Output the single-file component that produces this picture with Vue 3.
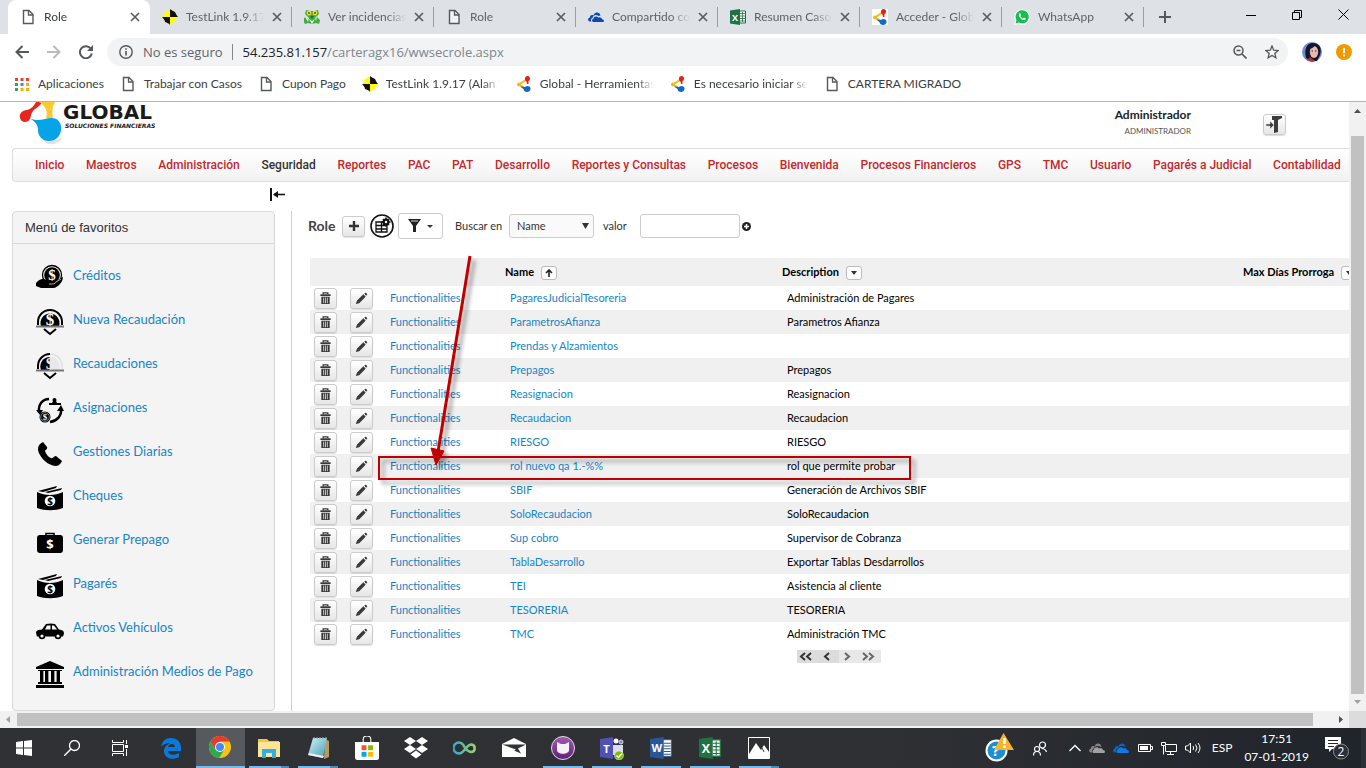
<script setup>
import { h, ref } from 'vue'

const SERIF = 'Liberation Serif, serif'
const SANS = 'Open Sans, sans-serif'

// Lettering that sits on top of an icon's shape, in the units of its box.
const marks = {
  excel: { t: 'X', x: 5, y: 11.5, size: 9, fill: '#fff', font: SANS },
  word: { t: 'W', x: 5, y: 11, size: 8, fill: '#fff', font: SANS },
  teams: { t: 'T', x: 6.5, y: 16.5, size: 11, fill: '#fff', font: SANS },
  hand: { t: '$', x: 16, y: 16, size: 15, fill: '#fff', font: SERIF },
  coin: { t: '$', x: 14, y: 17, size: 17, fill: '#fff', font: SERIF },
  halfcoin: { t: '$', x: 14, y: 17, size: 17, fill: '#e8e8e8', font: SERIF },
  cycle: { t: '$', x: 9, y: 24, size: 9, fill: '#fff', font: SERIF },
  cash: { t: '$', x: 14, y: 21, size: 10, fill: '#000', font: SANS },
  case: { t: '$', x: 14, y: 21, size: 13, fill: '#fff', font: SANS },
}

const boxes = { 16: ['excel', 'word'], 24: ['teams'] }

const Icon = ({ name, size }) => {
  const m = marks[name]
  const box = boxes[16].includes(name) ? 16 : boxes[24].includes(name) ? 24 : size
  return h('svg', { width: size, height: size, viewBox: `0 0 ${box} ${box}` }, [
    h('use', { href: '#' + name, width: box, height: box }),
    m && h('text', { x: m.x, y: m.y, 'text-anchor': 'middle', 'font-size': m.size, 'font-weight': 700, 'font-family': m.font, fill: m.fill }, m.t),
  ])
}
Icon.props = ['name', 'size']

const tabs = [
  { icon: 'doc', title: 'Role', active: true },
  { icon: 'testlink', title: 'TestLink 1.9.17' },
  { icon: 'mantis', title: 'Ver incidencias' },
  { icon: 'doc', title: 'Role' },
  { icon: 'onedrive', title: 'Compartido co' },
  { icon: 'excel', title: 'Resumen Caso' },
  { icon: 'globalw', title: 'Acceder - Glob' },
  { icon: 'whatsapp', title: 'WhatsApp' },
]

const bookmarks = [
  { icon: 'apps', title: 'Aplicaciones' },
  { icon: 'doc', title: 'Trabajar con Casos' },
  { icon: 'doc', title: 'Cupon Pago' },
  { icon: 'testlink', title: 'TestLink 1.9.17 (Alan T', cut: true },
  { icon: 'global', title: 'Global - Herramientas', cut: true },
  { icon: 'global', title: 'Es necesario iniciar se', cut: true },
  { icon: 'doc', title: 'CARTERA MIGRADO' },
]

const menu = ['Inicio', 'Maestros', 'Administración', 'Seguridad', 'Reportes', 'PAC', 'PAT', 'Desarrollo', 'Reportes y Consultas', 'Procesos', 'Bienvenida', 'Procesos Financieros', 'GPS', 'TMC', 'Usuario', 'Pagarés a Judicial', 'Contabilidad']

const favorites = [
  { icon: 'hand', title: 'Créditos' },
  { icon: 'coin', title: 'Nueva Recaudación' },
  { icon: 'halfcoin', title: 'Recaudaciones' },
  { icon: 'cycle', title: 'Asignaciones' },
  { icon: 'phone', title: 'Gestiones Diarias' },
  { icon: 'cash', title: 'Cheques' },
  { icon: 'case', title: 'Generar Prepago' },
  { icon: 'cash', title: 'Pagarés' },
  { icon: 'car', title: 'Activos Vehículos' },
  { icon: 'bank', title: 'Administración Medios de Pago' },
]

const roles = [
  ['PagaresJudicialTesoreria', 'Administración de Pagares'],
  ['ParametrosAfianza', 'Parametros Afianza'],
  ['Prendas y Alzamientos', ''],
  ['Prepagos', 'Prepagos'],
  ['Reasignacion', 'Reasignacion'],
  ['Recaudacion', 'Recaudacion'],
  ['RIESGO', 'RIESGO'],
  ['rol nuevo qa 1.-%%', 'rol que permite probar'],
  ['SBIF', 'Generación de Archivos SBIF'],
  ['SoloRecaudacion', 'SoloRecaudacion'],
  ['Sup cobro', 'Supervisor de Cobranza'],
  ['TablaDesarrollo', 'Exportar Tablas Desdarrollos'],
  ['TEI', 'Asistencia al cliente'],
  ['TESORERIA', 'TESORERIA'],
  ['TMC', 'Administración TMC'],
]

const apps = [
  { icon: 'edge', name: 'Edge' },
  { icon: 'chrome', name: 'Chrome', current: true },
  { icon: 'folder', name: 'Explorador', open: true, multi: true },
  { icon: 'notepad', name: 'Bloc de notas', open: true, multi: true },
  { icon: 'store', name: 'Store', size: 24 },
  { icon: 'dropbox', name: 'Dropbox', size: 24 },
  { icon: 'infinity', name: 'Infinity', size: 24 },
  { icon: 'mail', name: 'Correo', size: 24 },
  { icon: 'github', name: 'GitHub', size: 24, open: true },
  { icon: 'teams', name: 'Teams', size: 24, open: true },
  { icon: 'word', name: 'Word', open: true },
  { icon: 'excel', name: 'Excel', open: true },
  { icon: 'photos', name: 'Fotos', open: true, multi: true },
]

const field = ref('Name')
const value = ref('')
</script>

<template>
  <div class="screen">
    <svg class="defs" aria-hidden="true">
      <defs>
        <linearGradient id="inf" x1="0" x2="1"><stop offset="0" stop-color="#35a7cf" /><stop offset="1" stop-color="#9bd36a" /></linearGradient>
        <linearGradient id="note" x1="0" y1="0" x2="1" y2="1"><stop offset="0" stop-color="#d5f2f7" /><stop offset="1" stop-color="#3c9fb4" /></linearGradient>
        <linearGradient id="gh" x1="0" y1="0" x2="0" y2="1"><stop offset="0" stop-color="#a35bb5" /><stop offset="1" stop-color="#5d2077" /></linearGradient>
      </defs>
      <symbol id="doc" viewBox="0 0 16 16"><path d="M3.500 1.500H9l4 4v9H3.500z" fill="#fff" fill-opacity=".6" stroke="#55585c" stroke-width="1.400" /><path d="M8.500 1.500v4.500H13" fill="none" stroke="#55585c" stroke-width="1.300" /></symbol>
      <symbol id="testlink" viewBox="0 0 16 16"><path d="M8 0 L8 8 H0 C1 7 2 6 3 3 C5 2 7 1 8 0z" fill="#ff0" /><path d="M8 0C9 1 11 2 13 3C14 5 15 7 16 8H8z" fill="#111" /><path d="M0 8H8V16C7 14 5 14 3 13C3 11 1 9 0 8z" fill="#111" /><path d="M8 8H16C14 9 14 11 13 13C11 13 9 14 8 16z" fill="#ff0" /></symbol>
      <symbol id="mantis" viewBox="0 0 16 16"><path d="M2 1l5 1h3l4-1 1 4-4 4 1 3 1-4 3 3-1 4-3-1-4 1-4-1-3 1-2-4 2-3 3 5 1-4-4-4z" fill="#3fae3a" /><path d="M5 10l3 5 3-5-3 2z" fill="#fff" /><circle cx="5" cy="4" r="2.400" fill="#f2e12c" /><circle cx="11" cy="4" r="2.400" fill="#f2e12c" /><circle cx="5" cy="4" r="1" fill="#543" /><circle cx="11" cy="4" r="1" fill="#543" /><path d="M6 7h4l-2 3z" fill="#187a25" /></symbol>
      <symbol id="onedrive" viewBox="0 0 16 16"><path d="M3.500 12.500H2C-.5 12-.5 9 2 8.500C2 6 4 5.500 5.500 6.500C6.500 2.500 12 2.500 12.500 7C11.500 6.700 11 7 10.500 7C8.500 5 5 6 4.500 9C3 9.500 2.500 11 3.500 12.500z" fill="#094ab2" /><path d="M5.500 13C3.500 13 3.500 10.200 5.500 9.800C5.500 7.300 9 6.800 10.200 8.700C12 7.500 14 9 14 10.200C16.500 10.200 16.500 13 14.500 13z" fill="#094ab2" /></symbol>
      <symbol id="cloudgray" viewBox="0 0 16 16"><path d="M3.500 12.500H2C-.5 12-.5 9 2 8.500C2 6 4 5.500 5.500 6.500C6.500 2.500 12 2.500 12.500 7C8.500 5 5 6 4.500 9C3 9.500 2.500 11 3.500 12.500z" fill="#858585" /><path d="M5 13C3 13 3 10 5 9.500C5 7 9 6.500 10 8.500C12 7 14 9 14 10C16.500 10 16.500 13 14.500 13z" fill="#a0a0a0" /></symbol>
      <symbol id="cloudblue" viewBox="0 0 16 16"><path d="M3.500 12.500H2C-.5 12-.5 9 2 8.500C2 6 4 5.500 5.500 6.500C6.500 2.500 12 2.500 12.500 7C8.500 5 5 6 4.500 9C3 9.500 2.500 11 3.500 12.500z" fill="#0a66c4" /><path d="M5 13C3 13 3 10 5 9.500C5 7 9 6.500 10 8.500C12 7 14 9 14 10C16.500 10 16.500 13 14.500 13z" fill="#0f7be0" /></symbol>
      <symbol id="excel" viewBox="0 0 16 16"><path d="M9 2h6.500v12H9z" fill="#fff" stroke="#207245" /><path d="M10 4.500h5M10 7h5M10 9.500h5M10 12h5M12.500 3v10" stroke="#207245" stroke-width=".8" /><path d="M0 1.500L10 0v16L0 14.500z" fill="#207245" /></symbol>
      <symbol id="word" viewBox="0 0 16 16"><path d="M9 2h6.500v12H9z" fill="#fff" stroke="#2a5699" stroke-width=".5" /><path d="M10 4.500h5M10 6.500h5M10 8.500h5M10 10.500h5M10 12.500h5" stroke="#2a5699" stroke-width=".8" /><path d="M0 1.500L10 0v16L0 14.500z" fill="#2a5699" /></symbol>
      <symbol id="global" viewBox="0 0 16 16"><path d="M10.500 3.500L3 8.500l5 3" fill="none" stroke="#f8b817" stroke-width="2" /><circle cx="3" cy="8.500" r="2" fill="#f8b817" /><path d="M9 2h4.500c0 1-1.500 3-1 6h-1.500c0-3-2-3-2-6z" fill="#e2231a" /><circle cx="11.500" cy="2.500" r="2.500" fill="#e2231a" /><path d="M4 10.500l5 .5c2-2 6-1 5.500 2 0 4-7 4-7 0z" fill="#1469c4" /></symbol>
      <symbol id="globalw" viewBox="0 0 16 16"><path d="M0 0h16v16H0z" fill="#fff" /><use href="#global" width="16" height="16" /></symbol>
      <symbol id="whatsapp" viewBox="0 0 16 16"><path d="M0 16l1.200-4.300A7.800 7.800 0 1 1 4.300 15z" fill="#fff" /><path d="M1.500 14.500l1-3.300A6.600 6.600 0 1 1 5 13.600z" fill="#12c04b" /><path d="M5.500 4.300c-1 .8-1 2 0 3.700 1.500 2.200 3.500 3.500 5 3 1-.3 1.400-1.200 1.200-1.600l-1.700-.9-.9 1c-1.300-.4-2.200-1.300-2.700-2.500l.7-.9-.7-1.800z" fill="#fff" /></symbol>
      <symbol id="apps" viewBox="0 0 16 16"><path d="M1 2h3v3H1zM6.500 2h3v3h-3zM12 2h3v3h-3z" fill="#ea4335" /><path d="M1 7h3v3H1z" fill="#34a853" /><path d="M6.500 7h3v3h-3z" fill="#4285f4" /><path d="M12 7h3v3h-3zM6.500 12h3v3h-3zM12 12h3v3h-3z" fill="#f9ab00" /><path d="M1 12h3v3H1z" fill="#34a853" /></symbol>
      <symbol id="close" viewBox="0 0 10 10"><path d="M1 1l8 8M9 1L1 9" stroke="#5a5d61" stroke-width="1.700" /></symbol>

      <symbol id="hand" viewBox="0 0 28 28"><circle cx="16" cy="11" r="9.500" fill="#f4f4f4" stroke="#000" stroke-width="1.300" /><circle cx="16" cy="11" r="7.800" /><path d="M0 19c4-5 8-5 13-2 3 0 5 0 5 1 3-1 6-4 9-5 0 5-5 10-9 11H5l-5-2z" /><path d="M13 20c4 0 6 0 7-2l5-3" fill="none" stroke="#f4f4f4" stroke-width=".7" /></symbol>
      <symbol id="coin" viewBox="0 0 28 28"><path d="M2 17v-3a12 12 0 0 1 24 0v3" fill="none" stroke="#000" stroke-width="2" /><path d="M5 18a9.500 9.500 0 1 1 18 0z" /><path d="M0 18.500h28" stroke="#777" stroke-width="2" /><path d="M8 21l6 5 6-5" fill="none" stroke="#000" stroke-width="2" /></symbol>
      <symbol id="halfcoin" viewBox="0 0 28 28"><path d="M14 2a12 12 0 0 1 12 12v3" fill="none" stroke="#e4e4e4" stroke-width="2" /><path d="M14 5a9.500 9.500 0 0 1 9 13h-9z" fill="#e8e8e8" /><path d="M2 17v-3A12 12 0 0 1 14 2" fill="none" stroke="#000" stroke-width="2" /><path d="M5 18a9.500 9.500 0 0 1 9-13v13z" /><path d="M0 18.500h28" stroke="#777" stroke-width="2" /><path d="M8 21l6 5 6-5" fill="none" stroke="#000" stroke-width="2" /></symbol>
      <symbol id="cycle" viewBox="0 0 28 28"><path d="M3 16C2 8 7 3 13 3M25 12c1 8-4 13-11 14" fill="none" stroke="#000" stroke-width="2.500" /><path d="M0 14h7l-3 5zM21 15l4-6 3 6z" /><circle cx="9" cy="21" r="5.500" /><circle cx="9" cy="21" r="4.300" fill="none" stroke="#aaa" stroke-width=".7" /><circle cx="18.500" cy="4" r="2" /><path d="M17 5h3l1 2h4v2H13V7h3z" /></symbol>
      <symbol id="phone" viewBox="0 0 28 28"><path d="M7 2c-6 3-6 8-3 13 4 7 11 11 16 11 3 0 5-3 6-5l-6-5c-2 0-3 3-5 2-3-1-5-4-6-7 0-1 3-2 2-4z" /></symbol>
      <symbol id="cash" viewBox="0 0 28 28"><path d="M1 8c8 4 18 4 26 0v16c-8 3-18 3-26 0z" /><path d="M2 7L21 2l-1 2-13 4zM9 8l17-4-1 2-13 3z" /><circle cx="14" cy="17" r="5.300" fill="#fff" /></symbol>
      <symbol id="case" viewBox="0 0 28 28"><path d="M10 8V5.500h8V8" fill="none" stroke="#000" stroke-width="1.600" /><rect x="1" y="7" width="26" height="18" rx="3" /></symbol>
      <symbol id="car" viewBox="0 0 28 28"><path d="M0 17c0-3 3-3 6-3.500l4-5.500q5-1 9 0l4 5.500c3 .5 5 1 5 4l-1 3H1z" /><path d="M9 13.500l2-4h3.500v4zM16 9.500h2l3 4h-5z" fill="#f4f4f4" /><circle cx="6" cy="20" r="3.300" /><circle cx="22" cy="20" r="3.300" /><circle cx="6" cy="20" r="1.600" fill="#f4f4f4" /><circle cx="22" cy="20" r="1.600" fill="#f4f4f4" /></symbol>
      <symbol id="bank" viewBox="0 0 28 28"><path d="M14 1l14 6v2H0V7zM2 10h24v1H2zM4 11h3v11H4zM9 11h3v11H9zM15 11h3v11h-3zM21 11h3v11h-3zM2 22h24v2H2zM0 25h28v3H0z" /><path d="M7 11h1v11H7zM12 11h1v11h-1zM18 11h1v11h-1zM20 11h1v11h-1z" fill="#999" /></symbol>

      <symbol id="trash" viewBox="0 0 14 14"><path d="M4.500 2.500V1h5v1.500" fill="none" stroke="#3a3a3a" stroke-width="1.400" /><path d="M1.500 2.300h11v2h-11zM2.500 5h9v8h-9z" fill="#3a3a3a" /><path d="M5 6v6M7 6v6M9 6v6" stroke="#ddd" stroke-width=".9" /></symbol>
      <symbol id="pencil" viewBox="0 0 14 14"><path d="M1 13l1-3.500L9 2.500 11.500 5l-7 7zM10 1.800L11 1c.8-.6 2.600 1 2 2l-1 1z" fill="#3a3a3a" /></symbol>

      <symbol id="edge" viewBox="0 0 22 22"><path d="M1 10C2 4 6 1 11 1c6 0 10 4 10 10v3H8c0 4 6 5 11 2v4c-7 4-15 1-15-6 0-4 3-6 6-8C7 6 3 7 1 10zM8 10h7c0-4-6-4-7 0z" fill="#0b78dc" /></symbol>
      <symbol id="chrome" viewBox="0 0 22 22"><circle cx="11" cy="11" r="11" fill="#fbc116" /><path d="M1.500 5.500A11 11 0 0 0 10 22l5.500-8.500H6.500z" fill="#2da94f" /><path d="M1.500 5.500A11 11 0 0 1 20.500 5.500H11l-4.500 8z" fill="#e33b2e" /><circle cx="11" cy="11" r="5" fill="#fff" /><circle cx="11" cy="11" r="4" fill="#4688f4" /></symbol>
      <symbol id="folder" viewBox="0 0 22 22"><path d="M0 2h9l2 2h10v16H0z" fill="#f3c73d" /><path d="M0 5h22v15H0z" fill="#fee495" /><path d="M4 12h14v9h-4v-5H8v5H4z" fill="#33aee4" /></symbol>
      <symbol id="notepad" viewBox="0 0 22 22"><path d="M18 2l4 2v16l-5 2z" fill="#b89a63" /><path d="M6 1h14l-4 20-15-3z" fill="url(#note)" /><path d="M7 0v2M10 0v2M13 0v2M16 0v2M19 0v2" stroke="#9aa" /><path d="M1 18l15 3 1-2-15-3z" fill="#eee" /></symbol>
      <symbol id="store" viewBox="0 0 22 22"><path d="M7.500 6V3q0-3 3.500-3t3.500 3v3" fill="none" stroke="#fff" /><path d="M0 5.500h22v15c0 1-1 1.500-2 1.500H2c-1 0-2-1-2-2z" fill="#fff" /><path d="M6 8.500h4.500V13H6z" fill="#f35325" /><path d="M12 8.500h4.500V13H12z" fill="#81bc06" /><path d="M6 14.500h4.500V19H6z" fill="#05a6f0" /><path d="M12 14.500h4.500V19H12z" fill="#ffba08" /></symbol>
      <symbol id="dropbox" viewBox="0 0 24 24"><path d="M6 1l6 4-6 4-6-4zM18 1l6 4-6 4-6-4zM6 9l6 4-6 4-6-4zM18 9l6 4-6 4-6-4zM12 14.500l5.500 4L12 22.500l-5.500-4z" fill="#fff" /></symbol>
      <symbol id="infinity" viewBox="0 0 24 24"><path d="M12 12C10 7.500 8 6.500 6 6.500a5.500 5.500 0 0 0 0 11c5.500 0 7-9 12.500-9a3.800 3.800 0 0 1 0 7.500c-3 0-4.500-1.500-6.500-4" fill="none" stroke="url(#inf)" stroke-width="2.500" /></symbol>
      <symbol id="mail" viewBox="0 0 24 24"><path d="M0 8L12 2l12 6v13H0z" fill="#fff" /><path d="M0 8.500l14 5-2 1 7 3-3-5 8-4H0z" fill="#303236" /></symbol>
      <symbol id="github" viewBox="0 0 24 24"><circle cx="12" cy="12" r="11.500" fill="url(#gh)" stroke="#ddd" /><path d="M6 6l4 2h4l4-2v8c0 5-12 5-12 0z" fill="#f6f0f7" /></symbol>
      <symbol id="teams" viewBox="0 0 24 24"><circle cx="16" cy="5" r="2.500" fill="#fff" /><circle cx="21" cy="6" r="2" fill="#7b83eb" stroke="#ddd" /><path d="M13 9h10v10H13z" fill="#dcdcf0" /><path d="M0 3l13-2v22L0 21z" fill="#4f52b2" /><circle cx="19" cy="19.500" r="4.500" fill="#7fba00" stroke="#fff" stroke-width=".5" /><path d="M16.500 19.500l2 2 3.500-4" fill="none" stroke="#fff" stroke-width="1.500" /></symbol>
      <symbol id="photos" viewBox="0 0 22 22"><path d="M.5.500h21v21H.5z" fill="none" stroke="#fff" /><path d="M1 17L8 6l5 7 3-5 5 7v6H1z" fill="#fff" /><path d="M14 11l2 4" stroke="#303236" /></symbol>
    </svg>

    <header class="tabs">
      <div v-for="(t, i) in tabs" :key="i" class="tab" :class="{ active: t.active }">
        <Icon :name="t.icon" :size="16" />
        <span class="fade">{{ t.title }}</span>
        <button class="plain" aria-label="Cerrar"><svg class="x"><use href="#close" /></svg></button>
      </div>
      <button class="plain newtab" aria-label="Nueva pestaña"><svg width="12" height="12"><path d="M6 0v12M0 6h12" stroke="#55585c" stroke-width="2" /></svg></button>
      <div class="winbtns">
        <button class="plain" aria-label="Minimizar"><svg width="10" height="10"><path d="M0 5.500h10" stroke="#000" /></svg></button>
        <button class="plain" aria-label="Restaurar"><svg width="10" height="10"><path d="M.5 2.500h7v7h-7zM2.500 2.500v-2h7v7h-2" fill="none" stroke="#000" /></svg></button>
        <button class="plain" aria-label="Cerrar ventana"><svg width="11" height="11"><path d="M.5.500l10 10M10.500.500l-10 10" stroke="#000" /></svg></button>
      </div>
    </header>

    <div class="toolbar">
      <button class="plain" aria-label="Atrás"><svg width="14" height="14"><path d="M14 7H1.500M7.500 1L1.500 7l6 6" fill="none" stroke="#55585c" stroke-width="2" /></svg></button>
      <button class="plain" aria-label="Adelante"><svg width="14" height="14"><path d="M0 7h12.500M6.500 1l6 6-6 6" fill="none" stroke="#b9bbbd" stroke-width="2" /></svg></button>
      <button class="plain" aria-label="Recargar"><svg width="14" height="14"><path d="M12 4a6 6 0 1 0 .8 4.500" fill="none" stroke="#55585c" stroke-width="2" /><path d="M14 0v6H8z" fill="#55585c" /></svg></button>
      <div class="omnibox">
        <svg width="14" height="14"><circle cx="7" cy="7" r="6.200" fill="none" stroke="#55585c" stroke-width="1.400" /><path d="M7 6v4.500M7 3.300v1.500" stroke="#55585c" stroke-width="1.600" /></svg>
        <span class="insecure">No es seguro</span>
        <span class="url"><b>54.235.81.157</b>/carteragx16/wwsecrole.aspx</span>
        <svg class="zoomi" width="14" height="14"><circle cx="5.500" cy="5.500" r="4.500" fill="none" stroke="#55585c" stroke-width="1.500" /><path d="M3.500 5.500h4M9 9l4.500 4.500" stroke="#55585c" stroke-width="1.700" /></svg>
        <svg width="14" height="14" viewBox="0 0 14 14"><path d="M7 1l1.700 4.200 4.500.3-3.400 2.900 1.100 4.400L7 10.400l-3.900 2.400 1.100-4.400L.8 5.500l4.500-.3z" fill="none" stroke="#55585c" stroke-width="1.300" /></svg>
      </div>
      <svg class="avatar" width="20" height="20" viewBox="0 0 20 20"><circle cx="10" cy="10" r="10" fill="#6d8fd0" /><path d="M4 16C2 8 4 1 11 1s9 6 7 12l-3 6H8z" fill="#17152a" /><ellipse cx="12" cy="10" rx="4.200" ry="6" fill="#e6b9ae" /><path d="M7 7q5-1 6-4l4 4-2-5H8z" fill="#17152a" /><path d="M5 18l3-3 5 4-3 1z" fill="#b5323c" /><path d="M9.500 9h1.500M13 9h1.500" stroke="#432" /></svg>
      <svg width="16" height="16"><circle cx="8" cy="8" r="8" fill="#f29900" /><path d="M8 4v5M8 10.500v2" stroke="#fff" stroke-width="2" /></svg>
    </div>

    <nav class="bookmarks">
      <a v-for="(b, i) in bookmarks" :key="i" href="#" :class="{ cut: b.cut }"><Icon :name="b.icon" :size="16" /><span>{{ b.title }}</span></a>
    </nav>

    <div class="frame">
      <div class="page">
        <div class="brandbar">
          <svg class="logo" width="47" height="44" viewBox="0 0 47 44"><path d="M26 27c2 10 14 14 21 8-4 8-14 9-18 5z" fill="#000" opacity=".12" /><path d="M20 0c-2 4-5 7-9 8-5 0-8 4-7 8 1 4 5 5 8 3 3-1 2-6 5-10 2-3 7-4 9-9z" fill="#e8251c" /><path d="M23 0h16c-3 5-3 10-2 17l-7-1c2-6 0-12-7-16z" fill="#fcc931" /><path d="M13 16c8 4 15 1 21 0 8-1 12 5 11 12-1 8-7 11-12 11-7 0-11-5-11-11 0-5-3-9-9-12z" fill="#06a3e6" /></svg>
          <div class="brand"><strong>GLOBAL</strong><small>SOLUCIONES FINANCIERAS</small></div>
          <div class="user"><strong>Administrador</strong><small>ADMINISTRADOR</small></div>
          <button class="btn" aria-label="Salir"><svg width="17" height="17"><path d="M6 0h10v2l-4 2v12l-4 1V4H6z" fill="#3c3c3c" /><path d="M0 8h4V5l4 4-4 4v-3H0z" fill="#3c3c3c" stroke="#eee" stroke-width=".5" /></svg></button>
        </div>

        <nav class="menu">
          <a v-for="m in menu" :key="m" href="#" :class="{ on: m === 'Seguridad' }">{{ m }}</a>
        </nav>

        <div class="collapse">
          <button class="plain" aria-label="Contraer menú"><svg width="16" height="13"><path d="M1 0v13" stroke="#111" stroke-width="2" /><path d="M4 6.500h11" stroke="#111" stroke-width="1.600" /><path d="M3 6.500L8 3v7z" fill="#111" /></svg></button>
        </div>

        <div class="columns">
          <aside class="sidebar">
            <h2>Menú de favoritos</h2>
            <ul>
              <li v-for="f in favorites" :key="f.title"><a href="#"><Icon :name="f.icon" :size="28" /><span>{{ f.title }}</span></a></li>
            </ul>
          </aside>

          <main class="content">
            <form class="search" @submit.prevent>
              <h1>Role</h1>
              <button type="button" class="btn" aria-label="Agregar"><svg width="10" height="10"><path d="M5 0v10M0 5h10" stroke="#333" stroke-width="2.400" /></svg></button>
              <button type="button" class="plain round" aria-label="Columnas"><svg width="24" height="24"><circle cx="12" cy="12" r="11" fill="#fff" stroke="#111" stroke-width="1.600" /><path d="M6 8h11v10H6zM6 11.500h11M6 15h11M11.500 8v10" fill="none" stroke="#111" stroke-width="1.300" /><circle cx="16" cy="8" r="3.500" fill="#111" /><path d="M16 3.500v9M11.500 8h9M13 5l6 6M19 5l-6 6" stroke="#111" stroke-width="1.600" /><circle cx="16" cy="8" r="1.200" fill="#fff" /></svg></button>
              <button type="button" class="filter" aria-label="Filtrar"><svg width="26" height="14"><path d="M0 0h13L8 7v6H5V7z" fill="#222" /><path d="M3 2h7" stroke="#fff" stroke-width=".8" /><path d="M19 6h6l-3 3z" fill="#333" /></svg></button>
              <label for="field" class="in">Buscar en</label>
              <span class="select"><select id="field" v-model="field"><option>Name</option></select><svg width="7" height="6"><path d="M0 0h7L3.500 6z" fill="#333" /></svg></span>
              <label for="value" class="valor">valor</label>
              <input id="value" v-model="value" type="text">
              <button type="button" class="plain" aria-label="Agregar filtro"><svg width="9" height="9"><circle cx="4.500" cy="4.500" r="4.500" fill="#222" /><path d="M4.500 2v5M2 4.500h5" stroke="#fff" stroke-width="1.500" /></svg></button>
            </form>

            <table>
              <colgroup><col class="c1"><col class="c2"><col class="c3"><col class="c4"><col class="c5"><col></colgroup>
              <thead>
                <tr>
                  <th></th><th></th><th></th>
                  <th><span>Name</span><button class="sort" aria-label="Orden ascendente"><svg width="8" height="8"><path d="M4 8V1M1 4l3-3 3 3" fill="none" stroke="#222" stroke-width="1.600" /></svg></button></th>
                  <th><span>Description</span><button class="sort" aria-label="Ordenar"><svg width="6" height="4"><path d="M0 0h6L3 4z" fill="#333" /></svg></button></th>
                  <th><span>Max Días Prorroga</span><button class="sort" aria-label="Ordenar"><svg width="6" height="4"><path d="M0 0h6L3 4z" fill="#333" /></svg></button></th>
                </tr>
              </thead>
              <tbody>
                <tr v-for="r in roles" :key="r[0]">
                  <td class="act"><button class="btn" aria-label="Eliminar"><svg width="13" height="13"><use href="#trash" /></svg></button></td>
                  <td><button class="btn" aria-label="Modificar"><svg width="13" height="13"><use href="#pencil" /></svg></button></td>
                  <td><a href="#">Functionalities</a></td>
                  <td><a href="#">{{ r[0] }}</a></td>
                  <td>{{ r[1] }}</td>
                  <td></td>
                </tr>
              </tbody>
            </table>

            <div class="pager">
              <button class="plain" aria-label="Primera"><svg width="13" height="9"><path d="M6 1L2 4.500 6 8M12 1L8 4.500 12 8" /></svg></button>
              <button class="plain" aria-label="Anterior"><svg width="7" height="9"><path d="M6 1L2 4.500 6 8" /></svg></button>
              <button class="plain next" aria-label="Siguiente"><svg width="7" height="9"><path d="M1 1l4 3.500L1 8" /></svg></button>
              <button class="plain next" aria-label="Última"><svg width="13" height="9"><path d="M1 1l4 3.500L1 8M7 1l4 3.500L7 8" /></svg></button>
            </div>

            <svg class="callout" width="560" height="240" aria-hidden="true">
              <g fill="none" stroke="#c00000" stroke-width="3">
                <rect x="9" y="207" width="531" height="22" stroke-width="2" />
                <path d="M100 6L68 202" />
                <path d="M66 215l-5-17 13 3z" fill="#c00000" stroke-width="1" />
              </g>
            </svg>
          </main>
        </div>
      </div>
      <div class="vbar"><svg width="7" height="4"><path d="M0 4h7L3.500 0z" fill="#505050" /></svg><i></i><svg width="7" height="4"><path d="M0 0h7L3.500 4z" fill="#a0a0a0" /></svg></div>
      <div class="hbar"><svg width="4" height="7"><path d="M4 0v7L0 3.500z" fill="#a0a0a0" /></svg><i></i><svg width="4" height="7"><path d="M0 0v7l4-3.500z" fill="#505050" /></svg></div>
      <div class="corner"></div>
    </div>

    <footer class="taskbar">
      <div class="sys">
        <button class="plain" aria-label="Inicio"><svg width="16" height="16"><path d="M0 2l7-1v6.500H0zM8 1l8-1v7.500H8zM0 8.500h7V15l-7-1zM8 8.500h8V16l-8-1z" fill="#fff" /></svg></button>
        <button class="plain" aria-label="Buscar"><svg width="16" height="16"><circle cx="10.500" cy="5.500" r="5" fill="none" stroke="#fff" stroke-width="1.300" /><path d="M7 9l-7 7" stroke="#fff" stroke-width="1.400" /></svg></button>
        <button class="plain" aria-label="Vista de tareas"><svg width="16" height="16"><path d="M.5 0v2.500h11V0M.5 4.500h11v7H.5zM.5 16v-2.500h11V16M14.500 0v4M14.500 9v7" fill="none" stroke="#fff" /><path d="M13 5h3v3h-3z" fill="#fff" /></svg></button>
      </div>
      <button v-for="a in apps" :key="a.name" class="plain app" :class="{ current: a.current, open: a.open, multi: a.multi }" :aria-label="a.name"><Icon :name="a.icon" :size="a.size || 22" /></button>
      <div class="tray">
        <svg width="30" height="32"><circle cx="11.500" cy="18.500" r="11" fill="#fff" /><circle cx="11.500" cy="18.500" r="9" fill="#1b8fd0" /><text x="7" y="24" font-family="Open Sans, sans-serif" font-weight="700" font-size="15" fill="#fff">?</text><path d="M18.500 1L29 18H9z" fill="#f7b32b" /><path d="M19.500 6v6M19.500 13.500v2.500" stroke="#fff" stroke-width="2.400" /></svg>
        <svg class="people" width="14" height="15"><circle cx="9.500" cy="4" r="3" fill="none" stroke="#fff" stroke-width="1.200" /><circle cx="4" cy="8" r="2.500" fill="none" stroke="#fff" stroke-width="1.200" /><path d="M.5 14.500q0-4 3.500-4t3.500 4M8.500 7.500q4 0 5 3.500" fill="none" stroke="#fff" stroke-width="1.200" /></svg>
        <svg width="12" height="16"><path d="M.5 11L6 5.500l5.500 5.500" fill="none" stroke="#fff" stroke-width="1.300" /></svg>
        <svg width="16" height="16"><use href="#cloudgray" /></svg>
        <svg width="16" height="16"><use href="#cloudblue" /></svg>
        <svg width="16" height="16"><path d="M1.500 4.500h12v7h-12zM14 6.500h1.500v3H14" fill="none" stroke="#fff" /><path d="M3 6h8v4H3z" fill="#fff" /></svg>
        <svg width="16" height="16"><path d="M5 4.500h10.500v7H4.500V6M9.500 12v2M6 14.500h7M.5 2.500h4v3h-4zM2.500 6v8.500" fill="none" stroke="#fff" /></svg>
        <svg width="16" height="16"><path d="M.5 6h2l3-3v10l-3-3h-2zM8 6q1.500 2 0 4M10.500 4.500q3 3.500 0 7M13 3q4 5 0 10" fill="none" stroke="#fff" /></svg>
        <span class="lang">ESP</span>
        <time>17:51<br>07-01-2019</time>
        <svg class="notif" width="25" height="24"><path d="M0 1h16v12H7l-3 3v-3H0z" fill="#fff" /><path d="M3 4.500h10M3 7.500h10M3 10.500h6" stroke="#23262c" /><circle cx="16" cy="15.500" r="7.500" fill="#2b2e33" stroke="#8b8d90" /><text x="12.500" y="20" font-family="Open Sans, sans-serif" font-size="12" fill="#fff">2</text></svg>
      </div>
    </footer>
  </div>
</template>

<style>
body { background: #fff; }
</style>

<style scoped>
* { box-sizing: border-box; margin: 0; padding: 0; }
.screen { display: flex; flex-direction: column; height: 100vh; overflow: hidden; font: 12px/16px Lato, "Noto Sans", sans-serif; color: #3c4043; }
.defs { position: absolute; width: 0; height: 0; }
svg { display: block; flex: none; }
a { text-decoration: none; color: inherit; }
button, input, select { font: inherit; color: inherit; }
.plain { border: 0; background: none; display: flex; align-items: center; justify-content: center; }

.tabs { display: flex; height: 34px; background: #dee1e6; padding-left: 8px; align-items: center; flex: none; }
.tab { display: flex; align-items: center; width: 142px; height: 34px; padding: 0 10px 0 12px; gap: 8px; color: #5f6368; position: relative; }
.tab.active { background: #fff; border-radius: 8px 8px 0 0; color: #3c4043; }
.tab:not(.active)::after { content: ""; position: absolute; right: 0; top: 7px; height: 20px; width: 1px; background: #9a9da1; }
.tab .x { width: 10px; height: 10px; }
.fade, .cut span { overflow: hidden; white-space: nowrap; }
.fade { flex: 1; mask-image: linear-gradient(to right, #000 75%, transparent); }
.newtab { margin-left: 15px; }
.winbtns { display: flex; margin-left: auto; align-self: flex-start; height: 29px; }
.winbtns .plain { width: 46px; }

.toolbar { display: flex; align-items: center; height: 35px; flex: none; padding: 0 14px 0 15px; gap: 18px; font-family: "Open Sans", "Noto Sans", sans-serif; font-size: 13px; }
.omnibox { flex: 1; display: flex; align-items: center; height: 28px; border-radius: 14px; background: #f1f3f4; padding: 0 9px 0 12px; gap: 10px; color: #5f6368; margin-left: -4px; }
.insecure { padding-right: 9px; border-right: 1px solid #80868b; }
.url { color: #80868b; }
.url b { font-weight: 400; color: #202124; }
.zoomi { margin-left: auto; margin-right: 8px; }
.avatar { margin: 0 -4px; }

.bookmarks { display: flex; align-items: center; height: 33px; flex: none; padding: 0 0 2px 14px; gap: 16px; border-bottom: 1px solid #b6b4b6; }
.bookmarks a { display: flex; gap: 8px; white-space: nowrap; }
.bookmarks .cut { width: 138px; }
.cut span { flex: 1; mask-image: linear-gradient(to right, #000 85%, transparent); }

.frame { flex: 1; min-height: 0; display: grid; grid-template-columns: minmax(0, 1fr) 17px; grid-template-rows: minmax(0, 1fr) 17px; }
.page { overflow: hidden; display: flex; flex-direction: column; font: 11px/16px Lato, sans-serif; color: #333; }
.brandbar { display: flex; height: 46px; flex: none; padding: 0 63px 0 16px; }
.brand { display: flex; flex-direction: column; color: #1a1a1a; }
.brand strong { font: 700 20px/20px "DejaVu Sans", sans-serif; }
.brand small { font: italic 700 6px/8px "DejaVu Sans", sans-serif; padding-left: 2px; }
.user { margin-left: auto; margin-right: 72px; text-align: right; padding-top: 5px; }
.user strong { display: block; font-size: 12px; color: #222; }
.user small { display: block; font-size: 8px; color: #555; }
.btn { width: 23px; height: 21px; border: 1px solid #ccc; border-radius: 3px; background: linear-gradient(#fff, #e6e6e6); display: flex; align-items: center; justify-content: center; box-shadow: 0 1px 1px #0002; flex: none; }
.brandbar .btn { margin-top: 12px; }

.menu { display: flex; justify-content: space-between; align-items: center; height: 34px; flex: none; margin-left: 12px; padding: 0 8px 0 22px; border: 1px solid #ddd; border-right: 0; border-radius: 4px 0 0 4px; background: linear-gradient(#fff, #f2f2f2); font-family: Roboto, sans-serif; font-size: 12px; font-weight: 500; color: #c4282d; white-space: nowrap; }
.menu .on { color: #333; }

.collapse { display: flex; height: 29px; flex: none; align-items: center; padding: 0 0 4px 270px; }
.columns { flex: 1; min-height: 0; display: flex; padding-left: 12px; gap: 16px; }
.sidebar { width: 263px; flex: none; border: 1px solid #d9d9d9; border-radius: 4px; background: #f4f4f4; }
.sidebar h2 { height: 32px; padding-left: 12px; border-bottom: 1px solid #d9d9d9; font: 13px/31px "Liberation Sans", sans-serif; }
.sidebar ul { list-style: none; padding: 12px 0 0 23px; }
.sidebar li a { display: flex; align-items: center; height: 44px; gap: 9px; font-size: 13px; color: #1585c7; }
.sidebar li span { padding-bottom: 6px; }

.content { flex: 1; min-width: 0; border-left: 1px solid #d0d0d0; padding-left: 16px; position: relative; }
.search { display: flex; align-items: center; height: 30px; margin-bottom: 17px; }
.search h1 { font-size: 14px; font-weight: 700; color: #444; width: 34px; }
.round { margin: 0 4px 0 5px; }
.filter { width: 45px; height: 26px; border: 1px solid #ccc; border-radius: 3px; background: #fff; display: flex; align-items: center; justify-content: center; margin-right: 12px; }
.in { width: 54px; }
.select { position: relative; width: 85px; margin-right: 9px; }
.select select { appearance: none; width: 100%; height: 24px; border: 1px solid #ccc; border-radius: 3px; background: #fafafa; padding-left: 7px; display: block; }
.select svg { position: absolute; right: 5px; top: 9px; pointer-events: none; }
.valor { width: 37px; }
.search input { width: 100px; height: 24px; border: 1px solid #ccc; border-radius: 3px; background: #fff; margin-right: 2px; }
.search label { white-space: nowrap; }

table { table-layout: fixed; width: calc(100% - 2px); margin-left: 2px; border-collapse: collapse; color: #000; }
.c1 { width: 35px; } .c2 { width: 40px; } .c3 { width: 120px; } .c4 { width: 277px; } .c5 { width: 461px; }
th { height: 28px; background: #f0f0f0; text-align: left; font-weight: 700; white-space: nowrap; }
th span { margin-right: 7px; }
.sort { display: inline-flex; width: 16px; height: 14px; border: 1px solid #bbb; border-radius: 3px; background: #fff; align-items: center; justify-content: center; vertical-align: middle; }
td { height: 24px; padding-left: 5px; }
td.act { padding-left: 4px; }
tbody tr:nth-child(even) { background: #f0f0f0; }
td a { color: #1585c7; }

.pager { display: flex; width: 84px; height: 13px; margin: 4px 0 0 489px; background: #dcdcdc; }
.pager .plain { flex: 1; padding-right: 4px; }
.pager .next { background: #e8e8e8; }
.pager path { fill: none; stroke: #333; stroke-width: 2; }
.pager .next path { stroke: #666; }
.callout { position: absolute; left: 78px; top: 39px; pointer-events: none; filter: drop-shadow(4px 4px 2px #0006); }

.vbar, .hbar { background: #f1f1f1; display: flex; align-items: center; }
.vbar { flex-direction: column; padding: 7px 0; }
.vbar i { flex: 1; width: 13px; background: #c1c1c1; margin: 23px 0 6px; }
.hbar { padding: 0 6px; }
.hbar i { flex: 1; height: 13px; background: #c1c1c1; margin: 0 26px 0 7px; }
.corner { background: #dcdcdc; }

.taskbar { display: flex; height: 40px; flex: none; background: linear-gradient(to right, #2f3135, #2e3034 65%, #20242b); color: #fff; }
.sys { display: flex; margin-right: 3px; }
.sys .plain { width: 48px; }
.app { width: 49px; padding-right: 1px; position: relative; }
.current { background: #56595e; border-bottom: 2px solid #76b9ed; }
.open::after { content: ""; position: absolute; left: 4px; bottom: 0; width: 40px; height: 2px; background: #76b9ed; }
.multi::after { background: linear-gradient(to right, #76b9ed 32px, #5589b0 32px); }
.tray { display: flex; align-items: center; gap: 8px; margin-left: auto; padding-right: 11px; border-right: 5px solid #2c3037; }
.people { margin: 0 14px 0 10px; }
.lang { margin: 0 4px 0 3px; }
.tray time { text-align: center; line-height: 18px; }
.notif { margin-left: 8px; }
</style>
